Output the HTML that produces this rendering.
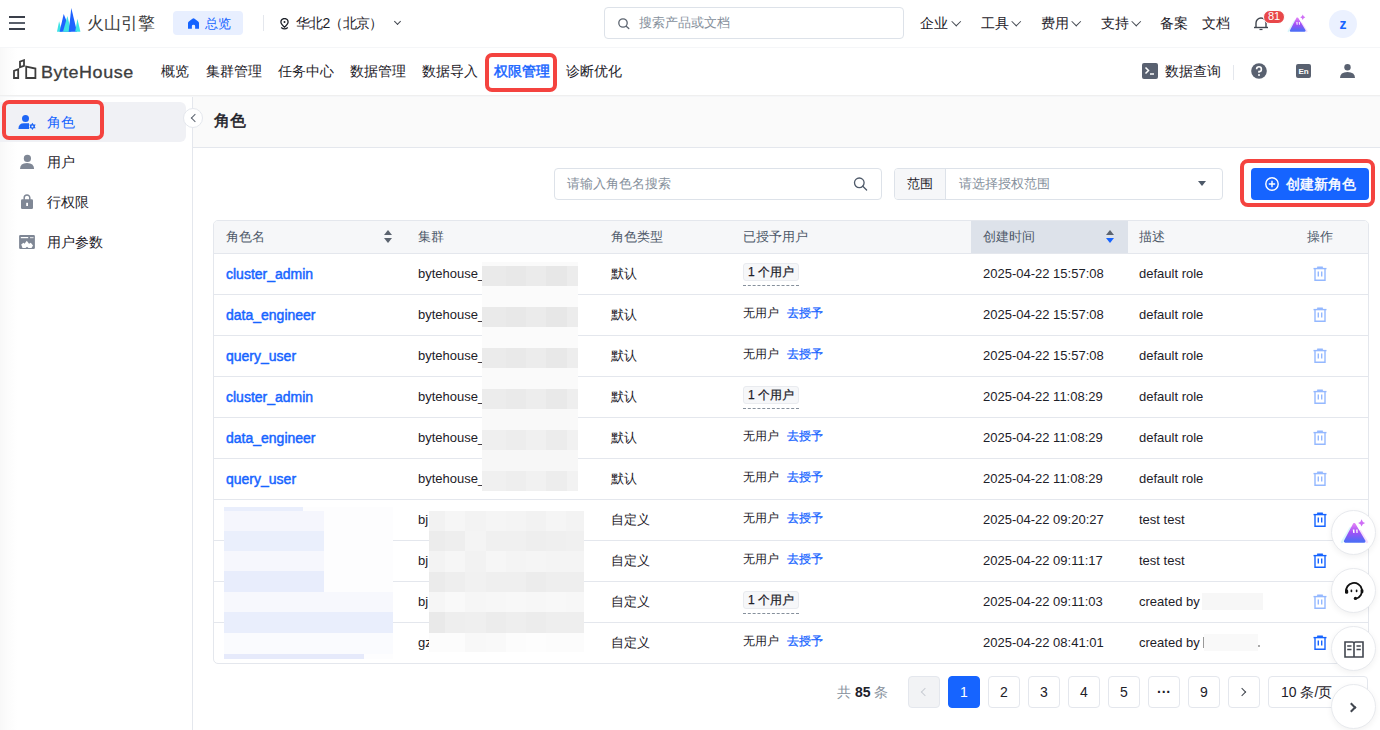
<!DOCTYPE html>
<html><head><meta charset="utf-8">
<style>
*{box-sizing:border-box;margin:0;padding:0}
html,body{width:1380px;height:730px;overflow:hidden;background:#fff;font-family:"Liberation Sans",sans-serif;color:#1d2129}
.a{position:absolute}
.t{position:absolute;white-space:nowrap;line-height:1}
#top{left:0;top:0;width:1380px;height:48px;background:#fff;border-bottom:1px solid #f5f6f8}
#nav{left:0;top:48px;width:1380px;height:47px;background:linear-gradient(90deg,#f8f8f8 0,#fcfcfc 8px,#fff 18px);box-shadow:0 1px 0 #efefef,0 2px 0 #f5f6f8;z-index:3}
#side{left:0;top:95px;width:193px;height:635px;background:linear-gradient(90deg,#f8f8f8 0,#fcfcfc 8px,#fff 18px);border-right:1px solid #e4e7ed}
#phead{left:193px;top:95px;width:1187px;height:53px;background:#fafafa;border-bottom:1px solid #e4e7ed}
.navi{font-size:14px;color:#1d2129;top:63px}
.topi{font-size:14px;color:#1d2129;top:16px}
.chev{position:absolute;width:6px;height:6px;border-right:1.4px solid #41464f;border-bottom:1.4px solid #41464f;transform:rotate(45deg)}
.th{font-size:13px;color:#4e5969;top:230px}
.td{font-size:13px;color:#1d2129}
.lnk{color:#1664ff;font-size:14px;-webkit-text-stroke:0.45px #1664ff}
.tag{height:18px;padding:0 4px;background:#f6f7f9;border:1px solid #e9ebef;border-radius:3px;font-size:12px;line-height:17px;color:#1d2129;white-space:nowrap;-webkit-text-stroke:0.25px #1d2129}
.pg{top:676px;width:32px;height:32px;border:1px solid #e4e7ed;border-radius:4px;background:#fff;font-size:14px;line-height:30px;text-align:center;color:#1d2129}
.fb{left:1331px;width:45px;height:45px;border-radius:50%;background:#fff;border:1px solid #e8eaee;box-shadow:0 2px 6px rgba(0,0,0,.06);z-index:10}
</style></head><body>

<!-- TOP BAR -->
<div id="top" class="a">
  <!-- hamburger -->
  <div class="a" style="left:9px;top:16px;width:16px;height:2px;background:#3a3f4a"></div>
  <div class="a" style="left:9px;top:22px;width:16px;height:2px;background:#5a606b"></div>
  <div class="a" style="left:9px;top:28px;width:16px;height:2px;background:#3a3f4a"></div>
  <!-- logo -->
  <svg class="a" style="left:57px;top:8px" width="24" height="24" viewBox="0 0 24 24">
    <polygon points="0,23.7 2.1,13.3 5,23.7" fill="#3ee3e6"/>
    <polygon points="2.6,23.7 6.7,5.9 13.9,23.7" fill="#1e62ff"/>
    <polygon points="6,23.7 10.4,8 14.3,23.7" fill="#3ee3e6"/>
    <polygon points="11.7,23.7 14.3,0 20,23.7" fill="#1e62ff"/>
    <polygon points="18.2,23.7 20.4,10.7 23.4,23.7" fill="#3ee3e6"/>
  </svg>
  <div class="t" style="left:87px;top:15px;font-size:17px;color:#3d3d3d">火山引擎</div>
  <!-- overview pill -->
  <div class="a" style="left:173px;top:11px;width:70px;height:24px;background:#e8efff;border-radius:4px"></div>
  <svg class="a" style="left:188px;top:18px" width="11" height="11" viewBox="0 0 10.5 10.5"><path d="M0 10.3 V4.8 Q0 3.9 0.8 3.3 L4.2 0.6 Q5.25 -0.2 6.3 0.6 L9.7 3.3 Q10.5 3.9 10.5 4.8 V10.3 H6.8 V7.6 Q6.8 6.4 5.25 6.4 Q3.7 6.4 3.7 7.6 V10.3 Z" fill="#1664ff"/></svg>
  <div class="t" style="left:205px;top:17px;font-size:13px;color:#1664ff">总览</div>
  <div class="a" style="left:263px;top:15px;width:1px;height:16px;background:#e4e7ed"></div>
  <!-- location -->
  <svg class="a" style="left:279.5px;top:17.5px" width="9" height="12" viewBox="0 0 9 12"><path d="M4.5 9.2 C2.2 7.2 0.9 5.6 0.9 4.1 A3.6 3.6 0 0 1 8.1 4.1 C8.1 5.6 6.8 7.2 4.5 9.2 Z" fill="none" stroke="#1d2129" stroke-width="1.3"/><circle cx="4.5" cy="4.1" r="1" fill="#1d2129"/><path d="M1.2 9.4 Q4.5 12.2 7.8 9.4" fill="none" stroke="#1d2129" stroke-width="1.3"/></svg>
  <div class="t" style="left:296px;top:16px;font-size:14px;letter-spacing:-0.8px;color:#1d2129">华北2（北京）</div>
  <div class="chev" style="left:395px;top:19px;width:5px;height:5px"></div>
  <!-- search -->
  <div class="a" style="left:604px;top:7px;width:300px;height:32px;border:1px solid #dde2e9;border-radius:4px;background:#fff"></div>
  <svg class="a" style="left:617px;top:17px" width="14" height="14" viewBox="0 0 14 14"><circle cx="6" cy="6" r="4.2" fill="none" stroke="#5c6470" stroke-width="1.3"/><path d="M9.2 9.2 L11.8 11.6" stroke="#5c6470" stroke-width="1.3" stroke-linecap="round"/></svg>
  <div class="t" style="left:639px;top:16px;font-size:13px;color:#86909c">搜索产品或文档</div>
  <!-- right menu -->
  <div class="t topi" style="left:920px">企业</div><div class="chev" style="left:953px;top:18px;width:6.5px;height:6.5px"></div>
  <div class="t topi" style="left:981px">工具</div><div class="chev" style="left:1013px;top:18px;width:6.5px;height:6.5px"></div>
  <div class="t topi" style="left:1041px">费用</div><div class="chev" style="left:1073px;top:18px;width:6.5px;height:6.5px"></div>
  <div class="t topi" style="left:1101px">支持</div><div class="chev" style="left:1133px;top:18px;width:6.5px;height:6.5px"></div>
  <div class="t topi" style="left:1160px">备案</div>
  <div class="t topi" style="left:1202px">文档</div>
  <!-- bell -->
  <svg class="a" style="left:1253px;top:15px" width="16" height="16" viewBox="0 0 16 16"><path d="M3 12 V8 A5 5 0 0 1 13 8 V12" fill="none" stroke="#41464f" stroke-width="1.4"/><path d="M1 12.5 H15" stroke="#41464f" stroke-width="1.4"/><path d="M6.5 14.5 H9.5" stroke="#41464f" stroke-width="1.2"/></svg>
  <div class="a" style="left:1263px;top:10px;width:22px;height:14px;background:#e84749;border-radius:7px;border:1px solid #fff"></div>
  <div class="t" style="left:1263px;top:11px;width:22px;text-align:center;font-size:11px;color:#fff">81</div>
  <!-- ai icon -->
  <svg class="a" style="left:1287.2px;top:12.7px" width="21.9" height="21.9" viewBox="0 0 30 30"><defs><linearGradient id="ag" x1="0" y1="0" x2="0" y2="1"><stop offset="0" stop-color="#db7cf6"/><stop offset=".45" stop-color="#a54ff6"/><stop offset="1" stop-color="#4f6cf6"/></linearGradient></defs>
<path d="M2 25 L10.5 11" stroke="#c9f3fb" stroke-width="2.4" stroke-linecap="round" opacity=".7"/>
<path d="M20 14 L27 25" stroke="#f4d2fb" stroke-width="2.4" stroke-linecap="round" opacity=".7"/>
<polygon points="14.2,7.6 5.4,24.2 24,24.2" fill="url(#ag)" stroke="url(#ag)" stroke-width="3" stroke-linejoin="round"/>
<path d="M21.6 2.2 Q22.2 5.3 25.1 5.9 Q22.2 6.5 21.6 9.6 Q21 6.5 18.1 5.9 Q21 5.3 21.6 2.2Z" fill="#cf6ef6"/>
<path d="M12.8 12.5 L14.4 12.5 L14.6 16 L13.2 16Z M16.2 12.5 L17.6 12.5 L17.6 16 L16.4 16Z" fill="#fff"/></svg>
  <!-- avatar -->
  <div class="a" style="left:1329px;top:10px;width:28px;height:28px;border-radius:50%;background:#ebf1ff"></div>
  <div class="t" style="left:1329px;top:17px;width:28px;text-align:center;font-size:14px;font-weight:bold;color:#1664ff">z</div>
</div>

<!-- NAV -->
<div id="nav" class="a">
  <svg class="a" style="left:13px;top:11px" width="24" height="22" viewBox="0 0 24 22">
  <path d="M1 19 V11.8 L5.2 10.2 V19 Z" fill="none" stroke="#3d3d3d" stroke-width="1.8" stroke-linejoin="miter"/>
  <path d="M7 8.2 V2.6 L11 1.2 V6.8 Z" fill="none" stroke="#3d3d3d" stroke-width="1.8"/>
  <path d="M13.2 19 V7.6 L22.4 9.6 V19 Z" fill="none" stroke="#3d3d3d" stroke-width="1.8"/>
</svg>
  <div class="t" style="left:41px;top:17px;font-size:16px;letter-spacing:.5px;transform:scaleX(1.12);transform-origin:0 0;-webkit-text-stroke:.3px #3d3d3d;color:#3d3d3d">ByteHouse</div>
  <div class="t navi" style="left:161px;top:16px">概览</div>
  <div class="t navi" style="left:206px;top:16px">集群管理</div>
  <div class="t navi" style="left:278px;top:16px">任务中心</div>
  <div class="t navi" style="left:350px;top:16px">数据管理</div>
  <div class="t navi" style="left:422px;top:16px">数据导入</div>
  <div class="t navi" style="left:494px;top:16px;color:#1664ff;-webkit-text-stroke:.45px #1664ff">权限管理</div>
  <div class="a" style="left:485px;top:5px;width:72px;height:39px;border:4px solid #f4433f;border-radius:7px"></div>
  <div class="t navi" style="left:566px;top:16px">诊断优化</div>
  <!-- right -->
  <svg class="a" style="left:1142px;top:15px" width="16" height="16" viewBox="0 0 16 16"><rect x="0" y="0" width="16" height="16" rx="2" fill="#596170"/><path d="M3.5 4.5 L6.5 7.5 L3.5 10.5" fill="none" stroke="#fff" stroke-width="1.5"/><path d="M8 11 H12" stroke="#fff" stroke-width="1.5"/></svg>
  <div class="t navi" style="left:1165px;top:16px">数据查询</div>
  <div class="a" style="left:1233px;top:17px;width:1px;height:15px;background:#e4e7ed"></div>
  <svg class="a" style="left:1251px;top:15px" width="16" height="16" viewBox="0 0 16 16"><circle cx="8" cy="8" r="7.8" fill="#596170"/><path d="M5.6 6.2 A2.4 2.4 0 1 1 8 8.6 V9.8" fill="none" stroke="#fff" stroke-width="1.6"/><circle cx="8" cy="12" r="1" fill="#fff"/></svg>
  <svg class="a" style="left:1296px;top:16px" width="15" height="14" viewBox="0 0 15 14"><rect x="0" y="0" width="15" height="14" rx="2" fill="#596170"/><text x="7.5" y="10" font-size="8" font-family="Liberation Sans" font-weight="bold" fill="#fff" text-anchor="middle">En</text></svg>
  <svg class="a" style="left:1340px;top:16px" width="15" height="14" viewBox="0 0 15 14"><circle cx="7.5" cy="3.3" r="3.2" fill="#596170"/><path d="M0 14 Q0 8 7.5 8 Q15 8 15 14 Z" fill="#596170"/></svg>
</div>

<!-- SIDEBAR -->
<div id="side" class="a">
  <div class="a" style="left:0;top:7px;width:186px;height:40px;background:#f0f1f5;border-radius:0 6px 6px 0"></div>
</div>
<div class="a" style="left:2px;top:100px;width:102px;height:40px;border:4px solid #f4433f;border-radius:7px;z-index:2"></div>
<svg class="a" style="left:0;top:95px;z-index:3" width="60" height="170" viewBox="0 95 60 170">
<circle cx="25.5" cy="118.5" r="3.5" fill="#1e66f5"/>
<path d="M18.4 129 Q18.4 123.3 24 123.3 H29 V129 Z" fill="#1e66f5"/>
<path d="M32.4 122.8 L33.6 124.6 L35.6 124.6 L34.8 126.4 L35.6 128.2 L33.6 128.2 L32.4 130 L31.2 128.2 L29.4 128.2 L30.1 126.4 L29.4 124.6 L31.2 124.6 Z" fill="#1e66f5"/>
<circle cx="32.4" cy="126.4" r="1" fill="#eff0f4"/>
<circle cx="27.4" cy="158.4" r="3.6" fill="#7f8795"/>
<path d="M20 169 Q20 163 27 163 Q34.1 163 34.1 169 Z" fill="#7f8795"/>
<path d="M24.2 200 V197.8 A2.8 2.8 0 0 1 29.8 197.8 V200" fill="none" stroke="#7f8795" stroke-width="1.5"/>
<rect x="21" y="199.3" width="12" height="9.7" rx="1.2" fill="#7f8795"/>
<rect x="26.2" y="202.8" width="1.8" height="3.2" fill="#fff"/>
<rect x="19.1" y="235.1" width="15.8" height="13.8" rx="1.2" fill="#7f8795"/>
<rect x="20.8" y="237" width="7.4" height="1.2" fill="#fff"/>
<rect x="30" y="237" width="3.5" height="1.2" fill="#fff" opacity=".7"/>
<path d="M21.2 244.5 L23.5 242.8 L24.5 243.8 L26.8 240.8 L29 243.8 L30.8 242.8 L33 245.5 L31.5 248 H28.5 L27 246.8 L25.5 248 H22.5 Z" fill="#fff"/>
</svg>
<div class="t" style="left:47px;top:115px;font-size:14px;color:#1664ff">角色</div>

<div class="t" style="left:47px;top:155px;font-size:14px;color:#1d2129">用户</div>

<div class="t" style="left:47px;top:195px;font-size:14px;color:#1d2129">行权限</div>

<div class="t" style="left:47px;top:235px;font-size:14px;color:#1d2129">用户参数</div>

<!-- PAGE HEADER -->
<div id="phead" class="a"></div>
<div class="a" style="left:183px;top:108px;width:20px;height:20px;border-radius:50%;background:#fff;border:1px solid #e4e7ed;z-index:4"></div>
<div class="chev" style="left:192px;top:115px;width:6px;height:6px;transform:rotate(135deg);border-color:#5c6470;border-width:1.1px;z-index:5"></div>
<div class="t" style="left:214px;top:113px;font-size:16px;-webkit-text-stroke:0.5px #1d2129;color:#1d2129">角色</div>

<!-- TOOLBAR -->
<div class="a" style="left:554px;top:168px;width:328px;height:32px;border:1px solid #dde2e9;border-radius:4px;background:#fff"></div>
<div class="t" style="left:567px;top:177px;font-size:13px;color:#86909c">请输入角色名搜索</div>
<svg class="a" style="left:853px;top:176px" width="15" height="15" viewBox="0 0 15 15"><circle cx="6.3" cy="6.8" r="4.8" fill="none" stroke="#4e5969" stroke-width="1.3"/><path d="M9.8 10.3 L13.6 14" stroke="#4e5969" stroke-width="1.3" stroke-linecap="round"/></svg>
<div class="a" style="left:894px;top:168px;width:329px;height:32px;border:1px solid #dde2e9;border-radius:4px;background:#fff;overflow:hidden"><div class="a" style="left:0;top:0;width:51px;height:30px;background:#f6f7f9;border-right:1px solid #dde2e9"></div></div>
<div class="t" style="left:907px;top:177px;font-size:13px;color:#1d2129">范围</div>
<div class="t" style="left:959px;top:177px;font-size:13px;color:#86909c">请选择授权范围</div>
<svg class="a" style="left:1197px;top:180px" width="10" height="7" viewBox="0 0 10 7"><path d="M1 1 H9 L5 6Z" fill="#4e5969"/></svg>
<div class="a" style="left:1251px;top:168px;width:118px;height:32px;background:#1664ff;border-radius:4px"></div>
<svg class="a" style="left:1265px;top:177px" width="14" height="14" viewBox="0 0 14 14"><circle cx="7" cy="7" r="6.2" fill="none" stroke="#fff" stroke-width="1.4"/><path d="M7 3.8 V10.2 M3.8 7 H10.2" stroke="#fff" stroke-width="1.4"/></svg>
<div class="t" style="left:1286px;top:177px;font-size:14px;color:#fff;-webkit-text-stroke:.45px #fff">创建新角色</div>
<div class="a" style="left:1240px;top:159px;width:135px;height:48px;border:4px solid #f4433f;border-radius:8px"></div>
<!-- TABLE -->
<div class="a" style="left:213px;top:220px;width:1156px;height:444px;border:1px solid #e4e7ed;border-radius:5px;overflow:hidden;background:#fff">
<div class="a" style="left:0;top:0;width:1154px;height:33px;background:#f6f7f9;border-bottom:1px solid #e4e7ed"></div>
<div class="a" style="left:757px;top:0;width:157px;height:32px;background:#dde2ea"></div>
<div class="a" style="left:0;top:73px;width:1154px;height:1px;background:#e4e7ed"></div>
<div class="a" style="left:0;top:114px;width:1154px;height:1px;background:#e4e7ed"></div>
<div class="a" style="left:0;top:155px;width:1154px;height:1px;background:#e4e7ed"></div>
<div class="a" style="left:0;top:196px;width:1154px;height:1px;background:#e4e7ed"></div>
<div class="a" style="left:0;top:237px;width:1154px;height:1px;background:#e4e7ed"></div>
<div class="a" style="left:0;top:278px;width:1154px;height:1px;background:#e4e7ed"></div>
<div class="a" style="left:0;top:319px;width:1154px;height:1px;background:#e4e7ed"></div>
<div class="a" style="left:0;top:360px;width:1154px;height:1px;background:#e4e7ed"></div>
<div class="a" style="left:0;top:401px;width:1154px;height:1px;background:#e4e7ed"></div>
</div>
<div class="t th" style="left:226px">角色名</div>
<div class="t th" style="left:418px">集群</div>
<div class="t th" style="left:611px">角色类型</div>
<div class="t th" style="left:743px">已授予用户</div>
<div class="t th" style="left:983px">创建时间</div>
<div class="t th" style="left:1139px">描述</div>
<div class="t th" style="left:1307px">操作</div>
<svg class="a" style="left:384px;top:230px" width="8" height="13" viewBox="0 0 8 13"><path d="M4 0 L8 5 H0Z" fill="#5c6470"/><path d="M4 13 L8 8 H0Z" fill="#5c6470"/></svg>
<svg class="a" style="left:1106px;top:230px" width="8" height="13" viewBox="0 0 8 13"><path d="M4 0 L8 5 H0Z" fill="#5c6470"/><path d="M4 13 L8 8 H0Z" fill="#1664ff"/></svg>
<div class="t td lnk" style="left:226px;top:267px">cluster_admin</div>
<div class="t td" style="left:418px;top:267px">bytehouse_</div>
<div class="t td" style="left:611px;top:267px">默认</div>
<div class="a tag" style="left:743px;top:263px">1 个用户</div>
<div class="a" style="left:743px;top:285px;width:56px;height:0;border-top:1px dashed #86909c"></div>
<div class="t td" style="left:983px;top:267px">2025-04-22 15:57:08</div>
<div class="t td" style="left:1139px;top:267px">default role</div>
<svg class="a" style="left:1313px;top:266px" width="14" height="15" viewBox="0 0 14 15"><path d="M0.5 2.6 H13.5" stroke="#94b8ff" stroke-width="1.4"/><path d="M4.6 1.2 H9.4" stroke="#94b8ff" stroke-width="1.5" stroke-linecap="round"/><path d="M2 2.6 V14.2 H12 V2.6" fill="none" stroke="#94b8ff" stroke-width="1.4"/><path d="M5.3 5.6 V10.4 M8.7 5.6 V10.4" stroke="#94b8ff" stroke-width="1.4"/></svg>
<div class="t td lnk" style="left:226px;top:308px">data_engineer</div>
<div class="t td" style="left:418px;top:308px">bytehouse_</div>
<div class="t td" style="left:611px;top:308px">默认</div>
<div class="t" style="left:743px;top:307px;font-size:12px;color:#1d2129">无用户</div>
<div class="t" style="left:787px;top:307px;font-size:12px;color:#1664ff;-webkit-text-stroke:0.25px #1664ff">去授予</div>
<div class="t td" style="left:983px;top:308px">2025-04-22 15:57:08</div>
<div class="t td" style="left:1139px;top:308px">default role</div>
<svg class="a" style="left:1313px;top:307px" width="14" height="15" viewBox="0 0 14 15"><path d="M0.5 2.6 H13.5" stroke="#94b8ff" stroke-width="1.4"/><path d="M4.6 1.2 H9.4" stroke="#94b8ff" stroke-width="1.5" stroke-linecap="round"/><path d="M2 2.6 V14.2 H12 V2.6" fill="none" stroke="#94b8ff" stroke-width="1.4"/><path d="M5.3 5.6 V10.4 M8.7 5.6 V10.4" stroke="#94b8ff" stroke-width="1.4"/></svg>
<div class="t td lnk" style="left:226px;top:349px">query_user</div>
<div class="t td" style="left:418px;top:349px">bytehouse_</div>
<div class="t td" style="left:611px;top:349px">默认</div>
<div class="t" style="left:743px;top:348px;font-size:12px;color:#1d2129">无用户</div>
<div class="t" style="left:787px;top:348px;font-size:12px;color:#1664ff;-webkit-text-stroke:0.25px #1664ff">去授予</div>
<div class="t td" style="left:983px;top:349px">2025-04-22 15:57:08</div>
<div class="t td" style="left:1139px;top:349px">default role</div>
<svg class="a" style="left:1313px;top:348px" width="14" height="15" viewBox="0 0 14 15"><path d="M0.5 2.6 H13.5" stroke="#94b8ff" stroke-width="1.4"/><path d="M4.6 1.2 H9.4" stroke="#94b8ff" stroke-width="1.5" stroke-linecap="round"/><path d="M2 2.6 V14.2 H12 V2.6" fill="none" stroke="#94b8ff" stroke-width="1.4"/><path d="M5.3 5.6 V10.4 M8.7 5.6 V10.4" stroke="#94b8ff" stroke-width="1.4"/></svg>
<div class="t td lnk" style="left:226px;top:390px">cluster_admin</div>
<div class="t td" style="left:418px;top:390px">bytehouse_</div>
<div class="t td" style="left:611px;top:390px">默认</div>
<div class="a tag" style="left:743px;top:386px">1 个用户</div>
<div class="a" style="left:743px;top:408px;width:56px;height:0;border-top:1px dashed #86909c"></div>
<div class="t td" style="left:983px;top:390px">2025-04-22 11:08:29</div>
<div class="t td" style="left:1139px;top:390px">default role</div>
<svg class="a" style="left:1313px;top:389px" width="14" height="15" viewBox="0 0 14 15"><path d="M0.5 2.6 H13.5" stroke="#94b8ff" stroke-width="1.4"/><path d="M4.6 1.2 H9.4" stroke="#94b8ff" stroke-width="1.5" stroke-linecap="round"/><path d="M2 2.6 V14.2 H12 V2.6" fill="none" stroke="#94b8ff" stroke-width="1.4"/><path d="M5.3 5.6 V10.4 M8.7 5.6 V10.4" stroke="#94b8ff" stroke-width="1.4"/></svg>
<div class="t td lnk" style="left:226px;top:431px">data_engineer</div>
<div class="t td" style="left:418px;top:431px">bytehouse_</div>
<div class="t td" style="left:611px;top:431px">默认</div>
<div class="t" style="left:743px;top:430px;font-size:12px;color:#1d2129">无用户</div>
<div class="t" style="left:787px;top:430px;font-size:12px;color:#1664ff;-webkit-text-stroke:0.25px #1664ff">去授予</div>
<div class="t td" style="left:983px;top:431px">2025-04-22 11:08:29</div>
<div class="t td" style="left:1139px;top:431px">default role</div>
<svg class="a" style="left:1313px;top:430px" width="14" height="15" viewBox="0 0 14 15"><path d="M0.5 2.6 H13.5" stroke="#94b8ff" stroke-width="1.4"/><path d="M4.6 1.2 H9.4" stroke="#94b8ff" stroke-width="1.5" stroke-linecap="round"/><path d="M2 2.6 V14.2 H12 V2.6" fill="none" stroke="#94b8ff" stroke-width="1.4"/><path d="M5.3 5.6 V10.4 M8.7 5.6 V10.4" stroke="#94b8ff" stroke-width="1.4"/></svg>
<div class="t td lnk" style="left:226px;top:472px">query_user</div>
<div class="t td" style="left:418px;top:472px">bytehouse_</div>
<div class="t td" style="left:611px;top:472px">默认</div>
<div class="t" style="left:743px;top:471px;font-size:12px;color:#1d2129">无用户</div>
<div class="t" style="left:787px;top:471px;font-size:12px;color:#1664ff;-webkit-text-stroke:0.25px #1664ff">去授予</div>
<div class="t td" style="left:983px;top:472px">2025-04-22 11:08:29</div>
<div class="t td" style="left:1139px;top:472px">default role</div>
<svg class="a" style="left:1313px;top:471px" width="14" height="15" viewBox="0 0 14 15"><path d="M0.5 2.6 H13.5" stroke="#94b8ff" stroke-width="1.4"/><path d="M4.6 1.2 H9.4" stroke="#94b8ff" stroke-width="1.5" stroke-linecap="round"/><path d="M2 2.6 V14.2 H12 V2.6" fill="none" stroke="#94b8ff" stroke-width="1.4"/><path d="M5.3 5.6 V10.4 M8.7 5.6 V10.4" stroke="#94b8ff" stroke-width="1.4"/></svg>
<div class="t td" style="left:418px;top:513px">bj</div>
<div class="t td" style="left:611px;top:513px">自定义</div>
<div class="t" style="left:743px;top:512px;font-size:12px;color:#1d2129">无用户</div>
<div class="t" style="left:787px;top:512px;font-size:12px;color:#1664ff;-webkit-text-stroke:0.25px #1664ff">去授予</div>
<div class="t td" style="left:983px;top:513px">2025-04-22 09:20:27</div>
<div class="t td" style="left:1139px;top:513px">test test</div>
<svg class="a" style="left:1313px;top:512px" width="14" height="15" viewBox="0 0 14 15"><path d="M0.5 2.6 H13.5" stroke="#1664ff" stroke-width="1.4"/><path d="M4.6 1.2 H9.4" stroke="#1664ff" stroke-width="1.5" stroke-linecap="round"/><path d="M2 2.6 V14.2 H12 V2.6" fill="none" stroke="#1664ff" stroke-width="1.4"/><path d="M5.3 5.6 V10.4 M8.7 5.6 V10.4" stroke="#1664ff" stroke-width="1.4"/></svg>
<div class="t td" style="left:418px;top:554px">bj</div>
<div class="t td" style="left:611px;top:554px">自定义</div>
<div class="t" style="left:743px;top:553px;font-size:12px;color:#1d2129">无用户</div>
<div class="t" style="left:787px;top:553px;font-size:12px;color:#1664ff;-webkit-text-stroke:0.25px #1664ff">去授予</div>
<div class="t td" style="left:983px;top:554px">2025-04-22 09:11:17</div>
<div class="t td" style="left:1139px;top:554px">test test</div>
<svg class="a" style="left:1313px;top:553px" width="14" height="15" viewBox="0 0 14 15"><path d="M0.5 2.6 H13.5" stroke="#1664ff" stroke-width="1.4"/><path d="M4.6 1.2 H9.4" stroke="#1664ff" stroke-width="1.5" stroke-linecap="round"/><path d="M2 2.6 V14.2 H12 V2.6" fill="none" stroke="#1664ff" stroke-width="1.4"/><path d="M5.3 5.6 V10.4 M8.7 5.6 V10.4" stroke="#1664ff" stroke-width="1.4"/></svg>
<div class="t td" style="left:418px;top:595px">bj</div>
<div class="t td" style="left:611px;top:595px">自定义</div>
<div class="a tag" style="left:743px;top:591px">1 个用户</div>
<div class="a" style="left:743px;top:613px;width:56px;height:0;border-top:1px dashed #86909c"></div>
<div class="t td" style="left:983px;top:595px">2025-04-22 09:11:03</div>
<div class="t td" style="left:1139px;top:595px">created by</div>
<svg class="a" style="left:1313px;top:594px" width="14" height="15" viewBox="0 0 14 15"><path d="M0.5 2.6 H13.5" stroke="#94b8ff" stroke-width="1.4"/><path d="M4.6 1.2 H9.4" stroke="#94b8ff" stroke-width="1.5" stroke-linecap="round"/><path d="M2 2.6 V14.2 H12 V2.6" fill="none" stroke="#94b8ff" stroke-width="1.4"/><path d="M5.3 5.6 V10.4 M8.7 5.6 V10.4" stroke="#94b8ff" stroke-width="1.4"/></svg>
<div class="t td" style="left:418px;top:636px">gz</div>
<div class="t td" style="left:611px;top:636px">自定义</div>
<div class="t" style="left:743px;top:635px;font-size:12px;color:#1d2129">无用户</div>
<div class="t" style="left:787px;top:635px;font-size:12px;color:#1664ff;-webkit-text-stroke:0.25px #1664ff">去授予</div>
<div class="t td" style="left:983px;top:636px">2025-04-22 08:41:01</div>
<div class="t td" style="left:1139px;top:636px">created by</div>
<svg class="a" style="left:1313px;top:635px" width="14" height="15" viewBox="0 0 14 15"><path d="M0.5 2.6 H13.5" stroke="#1664ff" stroke-width="1.4"/><path d="M4.6 1.2 H9.4" stroke="#1664ff" stroke-width="1.5" stroke-linecap="round"/><path d="M2 2.6 V14.2 H12 V2.6" fill="none" stroke="#1664ff" stroke-width="1.4"/><path d="M5.3 5.6 V10.4 M8.7 5.6 V10.4" stroke="#1664ff" stroke-width="1.4"/></svg><!-- MOSAIC cluster rows 1-6 -->
<div class="a" style="left:482px;top:262px;width:96px;height:4px;background:#fafafa"></div>
<div class="a" style="left:482px;top:266px;width:24px;height:20px;background:#eaeaea"></div>
<div class="a" style="left:506px;top:266px;width:20px;height:20px;background:#e8e8e8"></div>
<div class="a" style="left:526px;top:266px;width:20px;height:20px;background:#ebebeb"></div>
<div class="a" style="left:546px;top:266px;width:21px;height:20px;background:#e7e7e7"></div>
<div class="a" style="left:567px;top:266px;width:11px;height:20px;background:#ececec"></div>
<div class="a" style="left:482px;top:286px;width:96px;height:21px;background:#fbfbfb"></div>
<div class="a" style="left:482px;top:307px;width:24px;height:20px;background:#eaeaea"></div>
<div class="a" style="left:506px;top:307px;width:20px;height:20px;background:#e8e8e8"></div>
<div class="a" style="left:526px;top:307px;width:20px;height:20px;background:#ebebeb"></div>
<div class="a" style="left:546px;top:307px;width:21px;height:20px;background:#e7e7e7"></div>
<div class="a" style="left:567px;top:307px;width:11px;height:20px;background:#ececec"></div>
<div class="a" style="left:482px;top:327px;width:96px;height:21px;background:#fbfbfb"></div>
<div class="a" style="left:482px;top:348px;width:24px;height:20px;background:#ebebeb"></div>
<div class="a" style="left:506px;top:348px;width:20px;height:20px;background:#e9e9e9"></div>
<div class="a" style="left:526px;top:348px;width:20px;height:20px;background:#ececec"></div>
<div class="a" style="left:546px;top:348px;width:21px;height:20px;background:#e8e8e8"></div>
<div class="a" style="left:567px;top:348px;width:11px;height:20px;background:#ededed"></div>
<div class="a" style="left:482px;top:368px;width:96px;height:21px;background:#fafafa"></div>
<div class="a" style="left:482px;top:389px;width:24px;height:20px;background:#ececec"></div>
<div class="a" style="left:506px;top:389px;width:20px;height:20px;background:#eaeaea"></div>
<div class="a" style="left:526px;top:389px;width:20px;height:20px;background:#ededed"></div>
<div class="a" style="left:546px;top:389px;width:21px;height:20px;background:#e9e9e9"></div>
<div class="a" style="left:567px;top:389px;width:11px;height:20px;background:#eeeeee"></div>
<div class="a" style="left:482px;top:409px;width:96px;height:21px;background:#f9f9f9"></div>
<div class="a" style="left:482px;top:430px;width:24px;height:20px;background:#efefef"></div>
<div class="a" style="left:506px;top:430px;width:20px;height:20px;background:#ededed"></div>
<div class="a" style="left:526px;top:430px;width:20px;height:20px;background:#f0f0f0"></div>
<div class="a" style="left:546px;top:430px;width:21px;height:20px;background:#ececec"></div>
<div class="a" style="left:567px;top:430px;width:11px;height:20px;background:#f1f1f1"></div>
<div class="a" style="left:482px;top:450px;width:96px;height:21px;background:#f7f7f7"></div>
<div class="a" style="left:482px;top:471px;width:24px;height:20px;background:#f0f0f0"></div>
<div class="a" style="left:506px;top:471px;width:20px;height:20px;background:#eeeeee"></div>
<div class="a" style="left:526px;top:471px;width:20px;height:20px;background:#f1f1f1"></div>
<div class="a" style="left:546px;top:471px;width:21px;height:20px;background:#ededed"></div>
<div class="a" style="left:567px;top:471px;width:11px;height:20px;background:#f2f2f2"></div>
<!-- MOSAIC name rows 7-10 -->
<div class="a" style="left:224px;top:507px;width:169px;height:152px;background:#fdfdfe"></div>
<div class="a" style="left:224px;top:507px;width:79px;height:4px;background:#e9eefc"></div>
<div class="a" style="left:224px;top:511px;width:100px;height:20px;background:#f5f6fd"></div>
<div class="a" style="left:224px;top:531px;width:100px;height:20px;background:#eaeffc"></div>
<div class="a" style="left:224px;top:551px;width:100px;height:20px;background:#f6f7fd"></div>
<div class="a" style="left:224px;top:571px;width:100px;height:21px;background:#e8edfc"></div>
<div class="a" style="left:224px;top:592px;width:169px;height:20px;background:#f7f8fd"></div>
<div class="a" style="left:224px;top:612px;width:169px;height:21px;background:#e9eefc"></div>
<div class="a" style="left:224px;top:633px;width:169px;height:21px;background:#fafbfe"></div>
<div class="a" style="left:224px;top:654px;width:140px;height:5px;background:#e6eafb"></div>
<!-- MOSAIC cluster rows 7-10 -->
<div class="a" style="left:429px;top:511px;width:16px;height:20px;background:#f2f2f2"></div>
<div class="a" style="left:445px;top:511px;width:20px;height:20px;background:#f6f6f6"></div>
<div class="a" style="left:465px;top:511px;width:21px;height:20px;background:#f3f3f3"></div>
<div class="a" style="left:486px;top:511px;width:20px;height:20px;background:#f5f5f5"></div>
<div class="a" style="left:506px;top:511px;width:20px;height:20px;background:#f4f4f4"></div>
<div class="a" style="left:526px;top:511px;width:20px;height:20px;background:#f2f2f2"></div>
<div class="a" style="left:546px;top:511px;width:20px;height:20px;background:#f5f5f5"></div>
<div class="a" style="left:566px;top:511px;width:18px;height:20px;background:#f3f3f3"></div>
<div class="a" style="left:429px;top:531px;width:16px;height:20px;background:#ececec"></div>
<div class="a" style="left:445px;top:531px;width:20px;height:20px;background:#eeeeee"></div>
<div class="a" style="left:465px;top:531px;width:21px;height:20px;background:#f4f4f4"></div>
<div class="a" style="left:486px;top:531px;width:20px;height:20px;background:#f0f0f0"></div>
<div class="a" style="left:506px;top:531px;width:20px;height:20px;background:#f0f0f0"></div>
<div class="a" style="left:526px;top:531px;width:20px;height:20px;background:#eeeeee"></div>
<div class="a" style="left:546px;top:531px;width:20px;height:20px;background:#efefef"></div>
<div class="a" style="left:566px;top:531px;width:18px;height:20px;background:#f0f0f0"></div>
<div class="a" style="left:429px;top:551px;width:16px;height:21px;background:#f3f3f3"></div>
<div class="a" style="left:445px;top:551px;width:20px;height:21px;background:#f6f6f6"></div>
<div class="a" style="left:465px;top:551px;width:21px;height:21px;background:#f2f2f2"></div>
<div class="a" style="left:486px;top:551px;width:20px;height:21px;background:#f6f6f6"></div>
<div class="a" style="left:506px;top:551px;width:20px;height:21px;background:#f4f4f4"></div>
<div class="a" style="left:526px;top:551px;width:20px;height:21px;background:#f5f5f5"></div>
<div class="a" style="left:546px;top:551px;width:20px;height:21px;background:#f4f4f4"></div>
<div class="a" style="left:566px;top:551px;width:18px;height:21px;background:#f4f4f4"></div>
<div class="a" style="left:429px;top:572px;width:16px;height:20px;background:#ebebeb"></div>
<div class="a" style="left:445px;top:572px;width:20px;height:20px;background:#eeeeee"></div>
<div class="a" style="left:465px;top:572px;width:21px;height:20px;background:#f1f1f1"></div>
<div class="a" style="left:486px;top:572px;width:20px;height:20px;background:#efefef"></div>
<div class="a" style="left:506px;top:572px;width:20px;height:20px;background:#efefef"></div>
<div class="a" style="left:526px;top:572px;width:20px;height:20px;background:#ececec"></div>
<div class="a" style="left:546px;top:572px;width:20px;height:20px;background:#eeeeee"></div>
<div class="a" style="left:566px;top:572px;width:18px;height:20px;background:#eeeeee"></div>
<div class="a" style="left:429px;top:592px;width:16px;height:20px;background:#f6f6f6"></div>
<div class="a" style="left:445px;top:592px;width:20px;height:20px;background:#f9f9f9"></div>
<div class="a" style="left:465px;top:592px;width:21px;height:20px;background:#f6f6f6"></div>
<div class="a" style="left:486px;top:592px;width:20px;height:20px;background:#f7f7f7"></div>
<div class="a" style="left:506px;top:592px;width:20px;height:20px;background:#f8f8f8"></div>
<div class="a" style="left:526px;top:592px;width:20px;height:20px;background:#f7f7f7"></div>
<div class="a" style="left:546px;top:592px;width:20px;height:20px;background:#f8f8f8"></div>
<div class="a" style="left:566px;top:592px;width:18px;height:20px;background:#f7f7f7"></div>
<div class="a" style="left:429px;top:612px;width:16px;height:21px;background:#e9e9e9"></div>
<div class="a" style="left:445px;top:612px;width:20px;height:21px;background:#eeeeee"></div>
<div class="a" style="left:465px;top:612px;width:21px;height:21px;background:#efefef"></div>
<div class="a" style="left:486px;top:612px;width:20px;height:21px;background:#ececec"></div>
<div class="a" style="left:506px;top:612px;width:20px;height:21px;background:#eeeeee"></div>
<div class="a" style="left:526px;top:612px;width:20px;height:21px;background:#ececec"></div>
<div class="a" style="left:546px;top:612px;width:20px;height:21px;background:#eeeeee"></div>
<div class="a" style="left:566px;top:612px;width:18px;height:21px;background:#eeeeee"></div>
<div class="a" style="left:429px;top:633px;width:16px;height:19px;background:#fcfcfc"></div>
<div class="a" style="left:445px;top:633px;width:20px;height:19px;background:#fcfcfc"></div>
<div class="a" style="left:465px;top:633px;width:21px;height:19px;background:#f8f8f8"></div>
<div class="a" style="left:486px;top:633px;width:20px;height:19px;background:#f9f9f9"></div>
<div class="a" style="left:506px;top:633px;width:20px;height:19px;background:#fcfcfc"></div>
<div class="a" style="left:526px;top:633px;width:20px;height:19px;background:#fdfdfd"></div>
<div class="a" style="left:546px;top:633px;width:20px;height:19px;background:#fcfcfc"></div>
<div class="a" style="left:566px;top:633px;width:18px;height:19px;background:#fcfcfc"></div>
<!-- desc mosaic -->
<div class="a" style="left:1202px;top:593px;width:61px;height:17px;background:#f7f7f7"></div>
<div class="a" style="left:1204px;top:634px;width:54px;height:17px;background:#f9f9f9"></div>
<div class="a" style="left:1203px;top:637px;width:1px;height:11px;background:#9a9a9a"></div>
<div class="a" style="left:1258px;top:645px;width:1.5px;height:1.5px;background:#aaa"></div>
<!-- PAGINATION -->
<div class="t" style="left:837px;top:685px;font-size:14px;color:#86909c">共 <b style="color:#1d2129">85</b> 条</div>
<div class="a pg" style="left:908px;background:#f2f3f5"><div class="chev" style="left:13px;top:12px;transform:rotate(135deg);border-color:#c9cdd4;border-width:1.2px"></div></div>
<div class="a pg" style="left:948px;background:#1664ff;border-color:#1664ff;color:#fff">1</div>
<div class="a pg" style="left:988px">2</div>
<div class="a pg" style="left:1028px">3</div>
<div class="a pg" style="left:1068px">4</div>
<div class="a pg" style="left:1108px">5</div>
<div class="a pg" style="left:1148px;font-weight:bold">···</div>
<div class="a pg" style="left:1188px">9</div>
<div class="a pg" style="left:1228px"><div class="chev" style="left:10px;top:12px;transform:rotate(-45deg);border-color:#41464f;border-width:1.2px"></div></div>
<div class="a pg" style="left:1268px;width:100px;text-align:left;padding-left:12px">10 条/页</div>
<!-- FLOATING -->
<div class="a fb" style="top:510px"></div>
<svg class="a" style="left:1340px;top:517px;z-index:11" width="30" height="30" viewBox="0 0 30 30"><defs><linearGradient id="ag2" x1="0" y1="0" x2="0" y2="1"><stop offset="0" stop-color="#db7cf6"/><stop offset=".45" stop-color="#a54ff6"/><stop offset="1" stop-color="#4f6cf6"/></linearGradient></defs>
<path d="M2 25 L10.5 11" stroke="#c9f3fb" stroke-width="2.4" stroke-linecap="round" opacity=".7"/>
<path d="M20 14 L27 25" stroke="#f4d2fb" stroke-width="2.4" stroke-linecap="round" opacity=".7"/>
<polygon points="14.2,7.6 5.4,24.2 24,24.2" fill="url(#ag2)" stroke="url(#ag2)" stroke-width="3" stroke-linejoin="round"/>
<path d="M21.6 2.2 Q22.2 5.3 25.1 5.9 Q22.2 6.5 21.6 9.6 Q21 6.5 18.1 5.9 Q21 5.3 21.6 2.2Z" fill="#cf6ef6"/>
<path d="M12.8 12.5 L14.4 12.5 L14.6 16 L13.2 16Z M16.2 12.5 L17.6 12.5 L17.6 16 L16.4 16Z" fill="#fff"/></svg>
<div class="a fb" style="top:568px"></div>
<svg class="a" style="left:1344px;top:581px;z-index:11" width="20" height="20" viewBox="0 0 20 20"><path d="M2.1 11.2 A8 8 0 1 1 12.1 17.7" fill="none" stroke="#111" stroke-width="1.8"/><rect x="1" y="8.6" width="3.2" height="4.2" rx="1.3" fill="#111"/><rect x="16.6" y="8.2" width="2.8" height="4" rx="1.2" fill="#111"/><circle cx="11.4" cy="17.4" r="1.6" fill="#111"/><ellipse cx="7.4" cy="9.9" rx=".9" ry="1.3" fill="#111"/><ellipse cx="12.6" cy="9.9" rx=".9" ry="1.3" fill="#111"/></svg>
<div class="a fb" style="top:626px"></div>
<svg class="a" style="left:1344px;top:641px;z-index:11" width="20" height="17" viewBox="0 0 20 17"><path d="M1 1 H8.5 Q10 1 10 2.5 V16 H1Z M19 1 H11.5 Q10 1 10 2.5 V16 H19Z" fill="none" stroke="#41464f" stroke-width="1.6"/><path d="M3.2 5 H7.5 M3.2 8.5 H7.5 M12.5 5 H16.8 M12.5 8.5 H16.8" stroke="#41464f" stroke-width="1.4"/></svg>
<div class="a fb" style="top:684px"></div>
<div class="chev" style="left:1348px;top:704px;width:7px;height:7px;transform:rotate(-45deg);border-color:#41464f;border-width:2px;z-index:11"></div>

</body></html>
